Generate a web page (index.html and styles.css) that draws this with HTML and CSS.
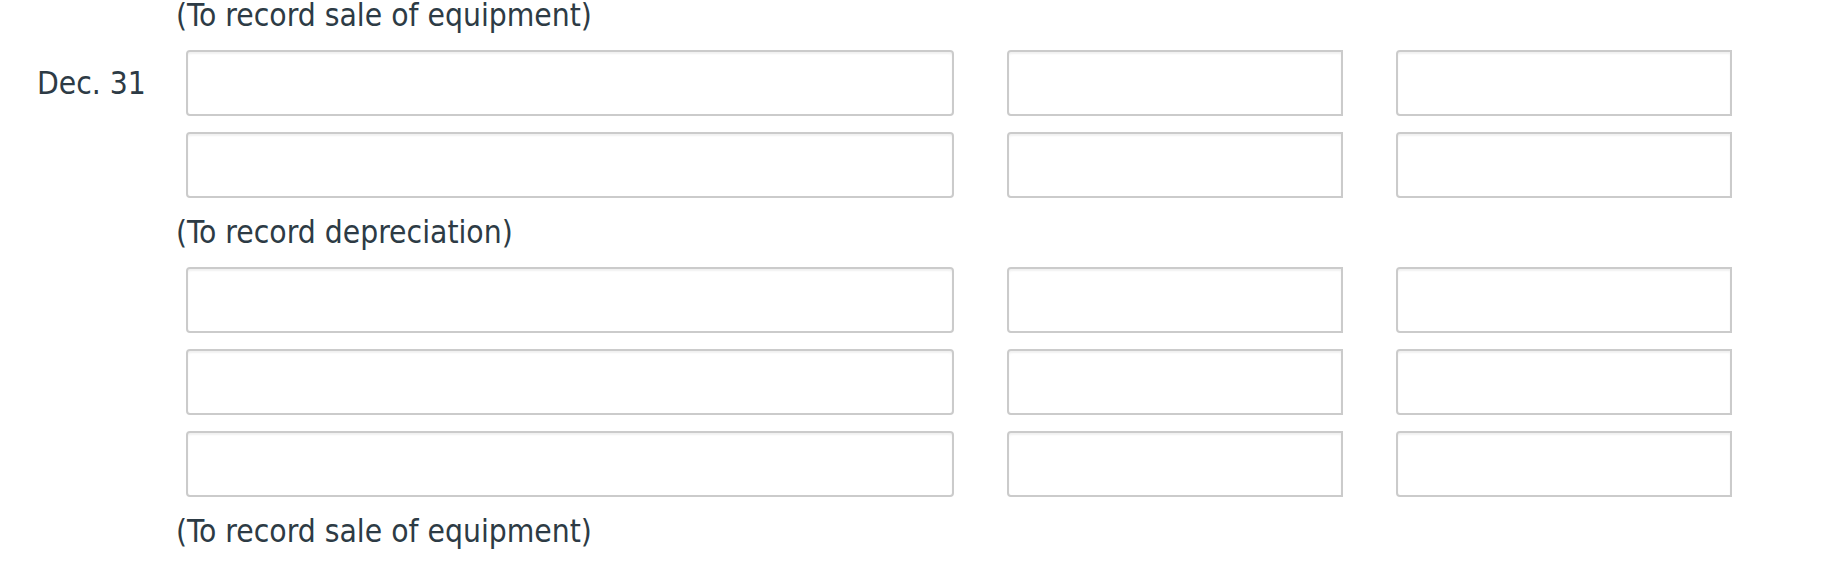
FILE: index.html
```html
<!DOCTYPE html>
<html lang="en">
<head>
<meta charset="utf-8">
<title>Journal entries</title>
<link rel="stylesheet" href="styles.css">
</head>
<body>
<div class="sheet">
  <div class="note">(To record sale of equipment)</div>

  <div class="row">
    <div class="date">Dec. 31</div>
    <input class="field account" type="text">
    <input class="field amount" type="text">
    <input class="field amount" type="text">
  </div>
  <div class="row">
    <div class="date"></div>
    <input class="field account" type="text">
    <input class="field amount" type="text">
    <input class="field amount" type="text">
  </div>

  <div class="note">(To record depreciation)</div>

  <div class="row">
    <div class="date"></div>
    <input class="field account" type="text">
    <input class="field amount" type="text">
    <input class="field amount" type="text">
  </div>
  <div class="row">
    <div class="date"></div>
    <input class="field account" type="text">
    <input class="field amount" type="text">
    <input class="field amount" type="text">
  </div>
  <div class="row">
    <div class="date"></div>
    <input class="field account" type="text">
    <input class="field amount" type="text">
    <input class="field amount" type="text">
  </div>

  <div class="note">(To record sale of equipment)</div>
</div>
</body>
</html>
```

FILE: styles.css
```css
html, body {
  margin: 0;
  padding: 0;
  background: #ffffff;
}

body {
  font-family: "DejaVu Sans Condensed", "DejaVu Sans", sans-serif;
  font-stretch: condensed;
  font-size: 31.5px;
  color: #2d3b45;
}

.sheet {
  display: flex;
  flex-direction: column;
  gap: 16px;
  margin-top: -3px;
}

.note {
  height: 37px;
  line-height: 37px;
  padding-left: 176px;
  white-space: nowrap;
}

.row {
  display: flex;
  align-items: center;
  gap: 53px;
  height: 66px;
}

.date {
  width: 149px;
  padding-left: 37px;
  margin-right: -53px;
  white-space: nowrap;
}

.field {
  box-sizing: border-box;
  height: 66px;
  margin: 0;
  padding: 0 12px;
  border: 2px solid #cbcbcb;
  background: #ffffff;
  box-shadow: inset 0 2px 2px rgba(0, 0, 0, 0.06);
  font: inherit;
  outline: none;
}

.account {
  width: 768px;
  border-radius: 4px;
}

.amount {
  width: 336px;
  border-radius: 4px 0 0 4px;
}
```
